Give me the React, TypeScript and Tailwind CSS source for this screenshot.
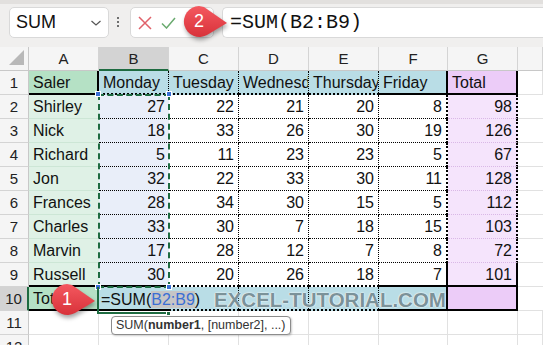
import React from 'react';

const FONT = "font-['Liberation_Sans',Arial,sans-serif]";

const COLS = [70, 70, 70, 70, 70, 69, 70, 25];
const LETTERS = ['A', 'B', 'C', 'D', 'E', 'F', 'G', ''];

const rows: (string | number)[][] = [
  ['Shirley', 27, 22, 21, 20, 8, 98],
  ['Nick', 18, 33, 26, 30, 19, 126],
  ['Richard', 5, 11, 23, 23, 5, 67],
  ['Jon', 32, 22, 33, 30, 11, 128],
  ['Frances', 28, 34, 30, 15, 5, 112],
  ['Charles', 33, 30, 7, 18, 15, 103],
  ['Marvin', 17, 28, 12, 7, 8, 72],
  ['Russell', 30, 20, 26, 18, 7, 101],
];

function Callout({ n, className }: { n: string; className: string }) {
  return (
    <div className={`absolute w-[52px] h-[40px] ${className}`}>
      <svg width="52" height="40" viewBox="0 0 52 40" className="absolute inset-0 drop-shadow-[1px_3px_2px_rgba(0,0,0,0.35)]">
        <defs>
          <linearGradient id={`g${n}`} x1="0" y1="0" x2="0" y2="1">
            <stop offset="0" stopColor="#f4585f" />
            <stop offset="1" stopColor="#d8323a" />
          </linearGradient>
        </defs>
        <path d="M17 4 A15.5 15.5 0 1 0 25 33 L45 21 L22 5 Z" fill={`url(#g${n})`} />
      </svg>
      <span className={`absolute left-[2px] top-[8px] w-[30px] text-center text-white text-[18px] leading-[22px] ${FONT}`}>{n}</span>
    </div>
  );
}

function Cell({
  w,
  children,
  className = '',
  right = false,
}: {
  w: number;
  children?: React.ReactNode;
  className?: string;
  right?: boolean;
}) {
  return (
    <div
      style={{ width: w }}
      className={`h-full shrink-0 overflow-hidden whitespace-nowrap px-[4px] text-[16px] leading-[23px] text-[#111] ${right ? 'text-right' : 'text-left'} ${className}`}
    >
      {children}
    </div>
  );
}

function RowHead({ n, active = false }: { n: number; active?: boolean }) {
  return (
    <div
      className={`w-[29px] h-full shrink-0 text-center text-[15px] leading-[23px] text-[#222] border-b border-[#d4d4d4] ${
        active ? 'bg-[#d3d3d3] border-r-2 border-r-[#1e6b41]' : 'bg-[#f5f5f5] border-r border-r-[#c8c8c8]'
      }`}
    >
      {n}
    </div>
  );
}

export default function App() {
  return (
    <div className={`relative w-[543px] h-[345px] overflow-hidden bg-white ${FONT}`}>
      {/* Toolbar / formula bar */}
      <div className="h-[47px] bg-[#f0efee] border-t-[4px] border-[#e2e0de] flex items-start pt-[3px] pl-[9px] gap-[8px]">
        <div className="w-[100px] h-[31px] bg-white border border-[#d9d9d9] rounded-[5px] flex items-center justify-between pl-[6px] pr-[6px]">
          <span className="text-[18px] text-[#111]">SUM</span>
          <svg width="12" height="8" viewBox="0 0 12 8">
            <path d="M1.5 2l4.5 4 4.5-4" fill="none" stroke="#555" strokeWidth="1.2" />
          </svg>
        </div>
        <div className="flex flex-col gap-[2px] pt-[10px] pr-[3px]">
          <span className="w-[2px] h-[2px] bg-[#444] rounded-full" />
          <span className="w-[2px] h-[2px] bg-[#444] rounded-full" />
          <span className="w-[2px] h-[2px] bg-[#444] rounded-full" />
        </div>
        <div className="w-[84px] h-[31px] bg-white border border-[#d9d9d9] rounded-[5px] flex items-center gap-[9px] pl-[7px]">
          <svg width="14" height="14" viewBox="0 0 14 14">
            <path d="M1 1l12 12M13 1L1 13" stroke="#e0616a" strokeWidth="1.5" />
          </svg>
          <svg width="15" height="12" viewBox="0 0 15 12">
            <path d="M1 6.5l4.5 4.5L14 1" fill="none" stroke="#6aaa6f" strokeWidth="1.5" />
          </svg>
        </div>
        <div className="flex-1 h-[31px] bg-white border border-r-0 border-[#d9d9d9] rounded-l-[5px] flex items-center pl-[7px]">
          <span className="font-['Liberation_Mono',monospace] text-[20px] text-[#111] leading-none">=SUM(B2:B9)</span>
        </div>
      </div>

      {/* Column header row */}
      <div className="h-[24px] flex">
        <div className="w-[29px] h-full shrink-0 bg-[#f5f5f5] border-r border-b border-[#c8c8c8] relative">
          <svg width="17" height="17" viewBox="0 0 17 17" className="absolute left-[8px] top-[2px]">
            <path d="M16 1V16H1Z" fill="#b8b8b8" />
          </svg>
        </div>
        {COLS.map((w, i) => (
          <div
            key={i}
            style={{ width: w }}
            className={`h-full shrink-0 text-center text-[15px] leading-[23px] text-[#222] border-r border-r-[#d4d4d4] ${
              i === 1 ? 'bg-[#d3d3d3] border-b-2 border-b-[#1e6b41] text-[#1e5a36]' : 'bg-[#f5f5f5] border-b border-b-[#c8c8c8]'
            }`}
          >
            {LETTERS[i]}
          </div>
        ))}
      </div>

      {/* Row 1 */}
      <div className="h-[24px] flex">
        <RowHead n={1} />
        <Cell w={70} className="bg-[#b5e1c5] border-b-2 border-r-2 border-black">Saler</Cell>
        {['Monday', 'Tuesday', 'Wednesday', 'Thursday'].map((t) => (
          <Cell key={t} w={70} className="bg-[#b9dde6] border-b-2 border-b-black border-r border-dotted border-r-black">
            {t}
          </Cell>
        ))}
        <Cell w={69} className="bg-[#b9dde6] border-b-2 border-b-black border-r-2 border-r-black">Friday</Cell>
        <Cell w={70} className="bg-[#ecccf8] border-b-2 border-b-black border-r-2 border-r-black">Total</Cell>
        <Cell w={25} className="border-b border-r border-[#e1e1e1]" />
      </div>

      {/* Data rows */}
      {rows.map((r, ri) => {
        const last = ri === rows.length - 1;
        const bottom = last ? 'border-b-2 border-b-black' : 'border-b border-dotted border-b-black';
        return (
          <div key={ri} className="h-[24px] flex">
            <RowHead n={ri + 2} />
            <Cell w={70} className={`bg-[#dff1e6] ${last ? 'border-b-2 border-b-black' : 'border-b border-b-[#cde6d6]'}`}>
              {r[0]}
            </Cell>
            <Cell w={70} right className={`bg-[#e9eef9] ${bottom}`}>
              {r[1]}
            </Cell>
            {[2, 3, 4].map((c) => (
              <Cell key={c} w={70} right className={`${bottom} border-r border-dotted border-r-black`}>
                {r[c]}
              </Cell>
            ))}
            <Cell w={69} right className={`${bottom} border-r-2 border-r-black`}>
              {r[5]}
            </Cell>
            <Cell
              w={70}
              right
              className={`bg-[#f5e4fc] border-r-2 border-r-black ${last ? 'border-b-2 border-b-black' : 'border-b border-dotted border-b-[#d9b8e6]'}`}
            >
              {r[6]}
            </Cell>
            <Cell w={25} className="border-b border-[#e1e1e1]" />
          </div>
        );
      })}

      {/* Row 10 */}
      <div className="h-[24px] flex">
        <RowHead n={10} active />
        <Cell w={70} className="bg-[#b5e1c5] border-b-2 border-b-black">Total</Cell>
        <Cell w={70} className="bg-[#b9dde6] border-b-2 border-b-black" />
        {[0, 1, 2].map((c) => (
          <Cell key={c} w={70} className="bg-[#b9dde6] border-b-2 border-b-black border-r border-dotted border-r-black" />
        ))}
        <Cell w={69} className="bg-[#b9dde6] border-b-2 border-b-black border-r-2 border-r-black" />
        <Cell w={70} className="bg-[#ecccf8] border-b-2 border-b-black border-r-2 border-r-black" />
        <Cell w={25} className="border-b border-[#e1e1e1]" />
      </div>

      {/* Rows 11, 12 */}
      {[11, 12].map((n) => (
        <div key={n} className="h-[24px] flex">
          <RowHead n={n} />
          {COLS.map((w, i) => (
            <Cell key={i} w={w} className="border-b border-r border-[#e1e1e1]" />
          ))}
        </div>
      ))}

      {/* Copy marquee around B2:B9 */}
      <div className="absolute left-[98px] top-[94px] w-[72px] h-[194px] border-2 border-dashed border-[#1e6b41]" />
      <div className="absolute left-[95px] top-[91px] w-[6px] h-[6px] bg-[#3a6fd4] border border-white" />
      <div className="absolute left-[166px] top-[91px] w-[6px] h-[6px] bg-[#3a6fd4] border border-white" />
      <div className="absolute left-[95px] top-[284px] w-[6px] h-[6px] bg-[#3a6fd4] border border-white" />
      <div className="absolute left-[166px] top-[284px] w-[6px] h-[6px] bg-[#3a6fd4] border border-white" />

      {/* Active cell B10 in edit mode */}
      <div className="absolute left-[97px] top-[287px] w-[72px] h-[27px] border-l-2 border-b-2 border-[#1e6b41]" />
      <div className="absolute left-[166px] top-[311px] w-[5px] h-[5px] bg-[#1e6b41] border border-white" />
      <div className="absolute left-[101px] top-[288px] h-[24px] text-[16px] leading-[24px] text-[#111] whitespace-nowrap">
        =SUM(<span className="bg-[#c6c6c6] text-[#3a6fd4]">B2:B9</span>)
      </div>

      {/* Watermark */}
      <div className="absolute left-[214px] top-[287px] h-[26px] text-[20.5px] leading-[26px] font-bold text-[#7b9299] [text-shadow:0_0_2px_#ffffff,0_0_1px_#ffffff] whitespace-nowrap">
        EXCEL-TUTORIAL.COM
      </div>

      {/* Function tooltip */}
      <div className="absolute left-[111px] top-[316px] h-[19px] px-[4px] bg-white border border-[#8c8c8c] rounded-[4px] shadow-[1px_1px_2px_rgba(0,0,0,0.2)] text-[12.5px] leading-[17px] text-[#333] whitespace-nowrap">
        SUM(<b>number1</b>, [number2], ...)
      </div>

      {/* Callouts */}
      <Callout n="1" className="left-[50px] top-[280px]" />
      <Callout n="2" className="left-[182px] top-[2px]" />
    </div>
  );
}
